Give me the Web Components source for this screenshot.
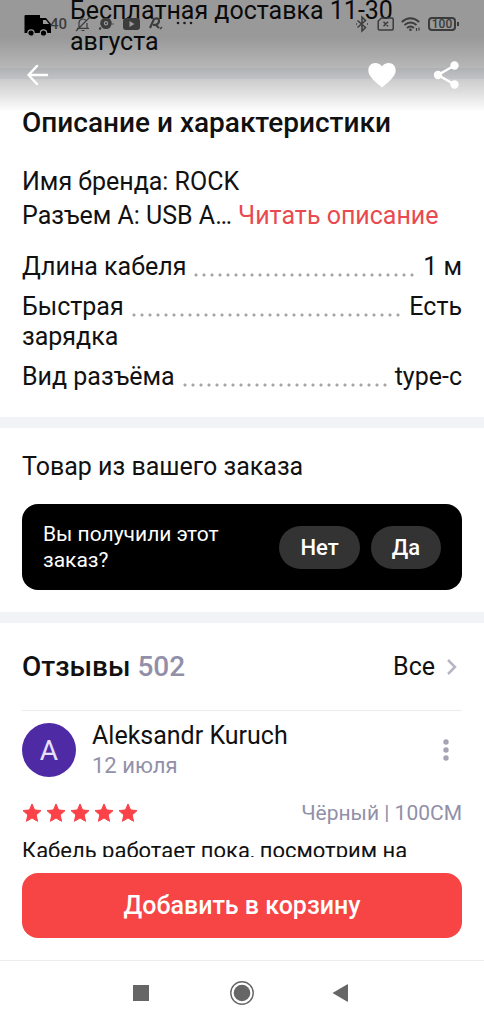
<!DOCTYPE html>
<html lang="ru">
<head>
<meta charset="utf-8">
<meta name="viewport" content="width=device-width, initial-scale=1">
<title>Описание и характеристики</title>
<style>
  body { margin: 0; background: #fff; color: #111; font-family: Roboto, "Noto Sans", sans-serif; }
</style>
</head>
<body>
<product-screen></product-screen>

<script>
const define = (name, html) => {
  const tpl = document.createElement('template');
  tpl.innerHTML = '<style>*{box-sizing:border-box}button{font:inherit;color:inherit;border:0;padding:0;margin:0;background:none;cursor:pointer}svg{display:block;flex:none}</style>' + html;
  customElements.define(name, class extends HTMLElement {
    constructor() {
      super();
      this.attachShadow({ mode: 'open' }).append(tpl.content.cloneNode(true));
    }
  });
};

/* System status icons */
define('status-bar', `
<style>
  :host { display: flex; justify-content: space-between; align-items: center; height: 48px; padding: 0 28px 0 50px; color: #3c3c3c; }
  .group { display: flex; align-items: center; gap: 8px; }
  .signals { gap: 7px; }
  .time { font-size: 15px; line-height: 20px; font-weight: 500; }
  .battery { display: flex; align-items: center; justify-content: center; width: 28px; height: 14px; border: 2px solid; border-radius: 4px; font-size: 12px; line-height: 14px; font-weight: 500; position: relative; }
  .battery::after { content: ""; position: absolute; right: -5px; top: 3px; width: 2px; height: 4px; background: currentColor; }
</style>
<div class="group">
  <span class="time">40</span>
  <svg width="16" height="16" viewBox="0 0 16 16" fill="none" stroke="currentColor" stroke-width="1.2"><path d="M4 12V7a4 4 0 0 1 7-2.6M12 7v5M2 12.4h12M15 1 1 15M6.500 14.500h3"/></svg>
  <svg width="16" height="16" viewBox="0 0 16 16" fill="currentColor"><path fill-rule="evenodd" d="M7 1.500a5.800 5.800 0 1 1 0 11.600A5.800 5.800 0 0 1 7 1.500zm0 3.600a2.200 2.200 0 1 0 0 4.400 2.200 2.200 0 0 0 0-4.400z"/><circle cx="1" cy="12.500" r="1.300"/><circle cx="7" cy="7.300" r="1"/><circle cx="14" cy="8" r=".7"/></svg>
  <svg width="18" height="16" viewBox="0 0 18 16"><rect x="0" y="2" width="17" height="12" rx="3" fill="currentColor"/><path d="M6.500 5l5 3-5 3z" fill="#9a9a9a"/></svg>
  <svg width="16" height="16" viewBox="0 0 16 16" fill="none" stroke="currentColor" stroke-width="2.200"><path d="M1 12 5 3q5-2 5 2t-6 4M7 9l3 3"/><path d="M11 13l2-2" stroke-width="1.500"/></svg>
  <svg width="22" height="16" viewBox="0 0 22 16" fill="#1c1c1c"><circle cx="5" cy="7" r="1.300"/><circle cx="11.500" cy="7" r="1.300"/><circle cx="18" cy="7" r="1.300"/></svg>
</div>
<div class="group signals">
  <svg width="14" height="18" viewBox="0 0 14 18" fill="none" stroke="currentColor" stroke-width="1.500"><path d="M2.500 5.500l8 7L7 16V2l3.500 3.500-8 7M1 9h1M12 9h1"/></svg>
  <svg width="18" height="16" viewBox="0 0 18 16" fill="none" stroke="currentColor" stroke-width="1.500"><path d="M5.500 2H16q1.200 0 1.200 1.200v9.600Q17.200 14 16 14H3.500q-1.300 0-1.300-1.200V5zM7.500 5.700l4.600 4.600M12.100 5.700l-4.600 4.600"/></svg>
  <svg width="20" height="16" viewBox="0 0 20 16" fill="none" stroke="currentColor" stroke-width="1.900"><path d="M.8 6q8.700-7.500 17.400 0M3.500 9q6-5 12 0M6 12q3.500-3 7 0"/><circle cx="9.500" cy="13.800" r="1.300" fill="currentColor" stroke="none"/><path d="M15.500 12v3M18 11.500v3" stroke-width="1.200"/></svg>
  <span class="battery">100</span>
</div>
`);

/* Translucent header laid over the scrolled page */
define('top-overlay', `
<style>
  :host { display: block; position: absolute; inset: 0 0 auto; height: 112px; color: #fff;
    background: linear-gradient(rgba(0,0,0,.4) 0, rgba(0,0,0,.4) 38px, rgba(0,0,0,.29) 66px, rgba(0,0,0,.22) 76px, rgba(0,0,0,.13) 92px, transparent 112px); }
  nav { display: flex; align-items: center; height: 54px; padding: 0 24px 0 26px; }
  .share { margin-left: 37px; }
  .like { margin-left: auto; }
</style>
<status-bar></status-bar>
<nav>
  <button aria-label="Назад"><svg width="24" height="24" viewBox="0 0 24 24" fill="none" stroke="#fff" stroke-width="2.500" stroke-linecap="round" stroke-linejoin="round"><path d="M11 3 2.500 12l8.500 9M2.500 12H21"/></svg></button>
  <button class="like" aria-label="В избранное"><svg width="28" height="26" viewBox="0 0 28 26" fill="#fff"><path d="M14 25.500C5 18 .3 13.500.3 8.200.3 3.800 3.600 1 7.300 1c2.800 0 5.300 1.300 6.700 3.600C15.400 2.300 17.900 1 20.700 1c3.700 0 7 2.800 7 7.200 0 5.300-4.700 9.800-13.700 17.300z"/></svg></button>
  <button class="share" aria-label="Поделиться"><svg width="27" height="28" viewBox="0 0 27 28" fill="#fff"><path d="M21.500 4.500 5 14l16.500 9.500" fill="none" stroke="#fff" stroke-width="2.500"/><circle cx="21.500" cy="4.500" r="4.200"/><circle cx="5" cy="14" r="4.200"/><circle cx="21.500" cy="23.500" r="4.200"/></svg></button>
</nav>
`);

/* The row is partly scrolled under the top edge of the screen */
define('shipping-row', `
<style>
  :host { display: flex; align-items: flex-start; gap: 18px; height: 68px; padding: 0 22px 0 24px; }
  p { margin: -5px 0 0; font-size: 25px; line-height: 31px; max-width: 340px; }
  svg { margin-top: 14px; }
</style>
<svg width="28" height="24" viewBox="0 0 28 24"><path d="M1.500 1H16v3h6l5 6v9H.5V2q0-1 1-1z"/><path d="M19 6h3l3 4h-6z" fill="#fff"/><g stroke="#fff" stroke-width="1.200"><circle cx="7" cy="19" r="3.200"/><circle cx="19.500" cy="19" r="3.200"/></g></svg>
<p><slot></slot></p>
`);

define('page-section', `
<style>
  :host { display: block; padding: 0 22px; border-top: 11px solid #f2f3f7; }
</style>
<slot></slot>
`);

define('product-description', `
<style>
  :host { display: block; padding: 26px 0 15px; }
  h2 { margin: 0 0 24px; font-size: 28px; line-height: 36px; font-weight: 500; }
  p { margin: 0 0 19px; font-size: 25px; line-height: 34px; }
  a { color: #e84a4f; text-decoration: none; }
</style>
<h2>Описание и характеристики</h2>
<p>Имя бренда: ROCK<br>Разъем A: USB A… <a href="#description">Читать описание</a></p>
<slot></slot>
`);

define('spec-row', `
<style>
  :host { display: flex; align-items: flex-start; gap: 8px; font-size: 25px; line-height: 30px; margin-bottom: 10px; }
  .dots { flex: 1; height: 4px; margin-top: 21px; background: radial-gradient(circle at 2px 2px, #a4a4a4 1px, transparent 2px) 0 0 / 8px 4px repeat-x; }
</style>
<span><slot name="name"></slot></span><span class="dots"></span><span><slot></slot></span>
`);

define('order-question', `
<style>
  :host { display: block; padding: 21px 0 22px; }
  h3 { margin: 0 0 19px; font-size: 25px; line-height: 36px; font-weight: 400; }
  .card { display: flex; align-items: center; gap: 11px; height: 86px; padding: 0 21px; border-radius: 16px; background: #000; color: #fff; }
  p { flex: 1; margin: 0; font-size: 21px; line-height: 26px; }
  p span { display: block; max-width: 200px; }
  button { height: 43px; padding: 0 21px; border-radius: 22px; background: #333; font-size: 22px; font-weight: 500; }
</style>
<h3>Товар из вашего заказа</h3>
<div class="card"><p><span>Вы получили этот заказ?</span></p><button>Нет</button><button>Да</button></div>
`);

define('reviews-head', `
<style>
  :host { display: flex; justify-content: space-between; align-items: center; height: 88px; border-bottom: 1px solid #ececf0; }
  h2 { margin: 0; font-size: 28px; line-height: 36px; font-weight: 500; }
  h2 span { color: #9190a8; }
  a { display: flex; align-items: center; gap: 11px; padding-right: 5px; color: inherit; text-decoration: none; font-size: 25px; line-height: 36px; }
</style>
<h2>Отзывы <span>502</span></h2>
<a href="#reviews">Все <svg width="11" height="16" viewBox="0 0 11 16" fill="none" stroke="#b5b5c4" stroke-width="2.500"><path d="M2 1l7 7-7 7"/></svg></a>
`);

define('star-rating', `
<style>
  :host { display: flex; gap: 4px; }
</style>
${'<svg width="20" height="20" viewBox="0 0 20 20" fill="#fa4248" stroke="#fa4248" stroke-width="1" stroke-linejoin="round"><path d="M10 1l2.600 5.900 6.400.7-4.800 4.300 1.400 6.400L10 15l-5.600 3.300 1.400-6.400L1 7.600l6.400-.7z"/></svg>'.repeat(5)}
`);

define('review-item', `
<style>
  :host { display: block; padding-top: 11px; }
  .author { display: flex; align-items: center; gap: 16px; height: 56px; }
  .avatar { flex: none; width: 54px; height: 54px; border-radius: 50%; background: #4e2ba5; color: #e8e0fa; font-size: 28px; line-height: 56px; text-align: center; }
  .who { flex: 1; padding-top: 2px; line-height: 30px; }
  .name { font-size: 25px; }
  .date { font-size: 22px; color: #9190a8; }
  .more { padding-right: 13px; }
  .meta { display: flex; justify-content: space-between; align-items: center; height: 30px; margin-top: 20px; }
  .variant { font-size: 21px; color: #9190a8; }
  p { margin: 7px 0 0; font-size: 22px; line-height: 32px; }
</style>
<div class="author">
  <div class="avatar">A</div>
  <div class="who"><div class="name"><slot name="name"></slot></div><div class="date"><slot name="date"></slot></div></div>
  <button class="more" aria-label="Ещё"><svg width="6" height="22" viewBox="0 0 6 22" fill="#a5a4b6"><circle cx="3" cy="3" r="2.700"/><circle cx="3" cy="11" r="2.700"/><circle cx="3" cy="19" r="2.700"/></svg></button>
</div>
<div class="meta"><star-rating></star-rating><span class="variant"><slot name="variant"></slot></span></div>
<p><slot></slot></p>
`);

define('buy-bar', `
<style>
  :host { display: block; padding: 16px 22px 22px; border-bottom: 1px solid #ececec; background: #fff; }
  button { display: block; width: 100%; height: 65px; border-radius: 16px; background: #f74444; color: #fff; font-size: 25px; font-weight: 500; }
</style>
<button><slot></slot></button>
`);

define('system-nav', `
<style>
  :host { display: flex; justify-content: center; align-items: center; gap: 76px; height: 63px; background: #fff; }
</style>
<button aria-label="Недавние"><svg width="24" height="24" viewBox="0 0 24 24" fill="#666"><path d="M3 4h16v16H3z"/></svg></button>
<button aria-label="Домой"><svg width="24" height="24" viewBox="0 0 24 24"><circle cx="12" cy="12" r="11.200" fill="none" stroke="#666" stroke-width="1.400"/><circle cx="12" cy="12" r="8.300" fill="#666"/></svg></button>
<button aria-label="Назад"><svg width="24" height="24" viewBox="0 0 24 24" fill="#666"><path d="M2.500 12 17 3.500q1-.5 1 .5v16q0 1-1 .5z"/></svg></button>
`);

define('product-screen', `
<style>
  :host { display: flex; flex-direction: column; height: 100vh; position: relative; overflow: hidden; }
  main { flex: 1; min-height: 0; overflow: hidden; }
</style>
<main>
  <shipping-row>Бесплатная доставка 11-30 августа</shipping-row>
  <page-section>
    <product-description>
      <spec-row><span slot="name">Длина кабеля</span>1 м</spec-row>
      <spec-row><span slot="name">Быстрая<br>зарядка</span>Есть</spec-row>
      <spec-row><span slot="name">Вид разъёма</span>type-c</spec-row>
    </product-description>
  </page-section>
  <page-section><order-question></order-question></page-section>
  <page-section>
    <reviews-head></reviews-head>
    <review-item>
      <span slot="name">Aleksandr Kuruch</span>
      <span slot="date">12 июля</span>
      <span slot="variant">Чёрный | 100CM</span>
      Кабель работает пока, посмотрим на
    </review-item>
  </page-section>
</main>
<buy-bar>Добавить в корзину</buy-bar>
<system-nav></system-nav>
<top-overlay></top-overlay>
`);
</script>
</body>
</html>
